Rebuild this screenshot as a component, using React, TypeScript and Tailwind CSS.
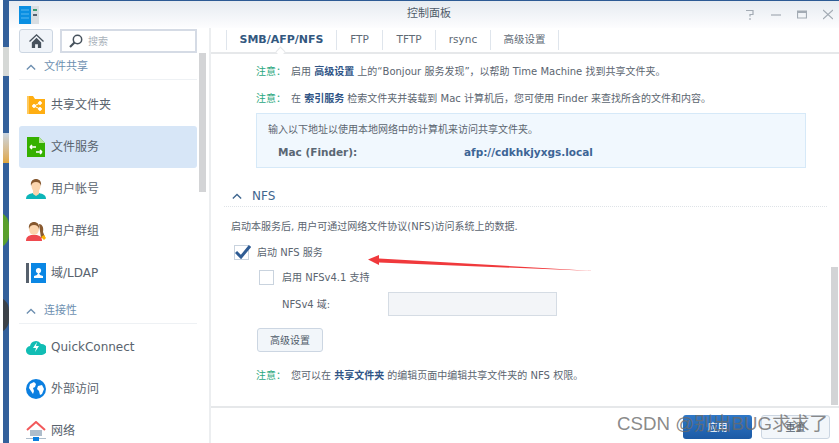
import { ReactNode } from "react"

const font = { fontFamily: '"DejaVu Sans", "Noto Sans CJK SC", sans-serif' }

function Chevron({ className }: { className: string }) {
  return (
    <svg viewBox="0 0 12 8" className={className} fill="none" stroke="currentColor" strokeWidth="1.6">
      <path d="M1 6.5 6 1.5l5 5" />
    </svg>
  )
}

const icons: Record<string, ReactNode> = {
  share: (
    <svg viewBox="0 0 20 20" className="w-5 h-5">
      <path d="M1 1h6l2 3h10v15H1z" fill="#ffae12" />
      <path d="M1 1h2v18H1z" fill="#ffc95c" />
      <g fill="#fff" stroke="#fff">
        <circle cx="8" cy="11" r="1.4" />
        <circle cx="14" cy="8" r="1.4" />
        <circle cx="14" cy="14" r="1.4" />
        <path d="M14 8l-6 3 6 3" fill="none" strokeWidth="1" />
      </g>
    </svg>
  ),
  file: (
    <svg viewBox="0 0 20 20" className="w-5 h-5">
      <path d="M1 0h12l6 6v14H1z" fill="#35b000" />
      <path d="M13 0l6 6h-6z" fill="#b6e59b" />
      <path d="M4 10h6M4 10l2-2M4 10l2 2M16 15h-6M16 15l-2-2M16 15l-2 2" stroke="#fff" strokeWidth="1.6" fill="none" />
    </svg>
  ),
  user: (
    <svg viewBox="0 0 20 20" className="w-5 h-5">
      <path d="M0 20c0-4 3-5 7-6h6c4 1 7 2 7 6z" fill="#0db5b8" />
      <path d="M7 11h6v4l-3 2-3-2z" fill="#fbd5ae" />
      <ellipse cx="10" cy="7" rx="4.5" ry="6" fill="#fbd5ae" />
      <path d="M5 7c-1-6 3-7 5-7s6 1 5 7c-1-3-2-4-5-4S6 4 5 7z" fill="#86582f" />
    </svg>
  ),
  group: (
    <svg viewBox="0 0 20 20" className="w-5 h-5">
      <path d="M13 3c3 0 5 3 4 8l2 5-4 1z" fill="#8a5a30" />
      <path d="M15 16l3-2 2 3-2 2z" fill="#fdb300" />
      <path d="M0 20c0-4 2-5 5-6h6c3 1 5 2 5 6z" fill="#ef4a4f" />
      <ellipse cx="8" cy="8" rx="5" ry="6" fill="#fbd5ae" />
      <path d="M3 8C2 2 6 1 8 1s6 1 5 7c-1-3-2-4-5-4S4 5 3 8z" fill="#86582f" />
    </svg>
  ),
  ldap: (
    <svg viewBox="0 0 20 20" className="w-5 h-5">
      <path d="M0 0h3v20H0z" fill="#56606c" />
      <path d="M5 0h15v20H5z" fill="#0b87e4" />
      <circle cx="12.5" cy="7.5" r="2.6" fill="#fff" />
      <path d="M12 10h1l1 2 3 1v2H8v-2l3-1z" fill="#fff" />
    </svg>
  ),
  quick: (
    <svg viewBox="0 0 20 20" className="w-5 h-5">
      <path d="M5 18a4.500 4.500 0 0 1-1-9 6 6 0 0 1 11-2 5.500 5.500 0 0 1 1 11z" fill="#11bdb4" />
      <path d="M11 5 7 11h3l-1 4 4-6h-3z" fill="#fff" />
    </svg>
  ),
  globe: (
    <svg viewBox="0 0 20 20" className="w-5 h-5">
      <circle cx="10" cy="10" r="10" fill="#0b7fe0" />
      <path d="M4 5l4-2 2 2-1 3-2 1 1 3-1 3-2-3-2-3zM12 7l4-1 2 4-2 5-2 1-1-4-2-2z" fill="#fff" />
    </svg>
  ),
  net: (
    <svg viewBox="0 0 20 20" className="w-5 h-5">
      <path d="M4 9h12v6H4z" fill="#aebdcb" />
      <path d="M1 9l9-8 9 8" fill="none" stroke="#f2595b" strokeWidth="2" />
      <path d="M0 17h20v1H0z" fill="#aebdcb" />
      <path d="M7 16h6v4H7z" fill="#0b7fe0" />
    </svg>
  ),
}

function SectionHead({ title, mt }: { title: string; mt: string }) {
  return (
    <div className={`${mt} h-[27px] pt-[2px] flex items-center pl-[7px] border-b border-[#eef1f4] text-[#6d8fb0]`}>
      <Chevron className="w-[10px] h-[7px]" />
      <span className="ml-[8px] text-[11px]">{title}</span>
    </div>
  )
}

function NavItem({ id, label, active }: { id: string; label: string; active?: boolean }) {
  return (
    <div className={`h-[42px] flex items-center pl-[7px] rounded-[3px] ${active ? "bg-[#d7e6f7]" : ""}`}>
      {icons[id]}
      <span className="ml-[5px] text-[12px] text-[#59636e]">{label}</span>
    </div>
  )
}

function Tab({ label, active, w }: { label: string; active?: boolean; w: string }) {
  return (
    <div
      className={`${w} h-[20px] flex items-center justify-center border-r border-[#dfe5ec] ${
        active ? "text-[11px] font-bold text-[#33587f]" : "text-[10.5px] text-[#606a75]"
      }`}
    >
      {label}
    </div>
  )
}

function Note({ children, mt }: { children: ReactNode; mt: string }) {
  return (
    <p className={`${mt} ml-[32px] h-[16px] leading-[16px] text-[10px] text-[#5b6570] whitespace-nowrap`}>
      <span className="text-[#2aa77e]">{"注意\uFF1A"}</span>
      <span className="ml-[5px]">{children}</span>
    </p>
  )
}

function Link({ children }: { children: ReactNode }) {
  return <span className="font-semibold text-[#2f5486]">{children}</span>
}

export default function App() {
  return (
    <div className="relative w-[839px] h-[443px] overflow-hidden flex bg-white" style={font}>
      <div className="w-[3px] shrink-0 bg-white" />
      {/* desktop peeking out on the left */}
      <div className="relative w-[6px] shrink-0 bg-[#33609b] overflow-hidden">
        <div className="absolute left-0 top-[47px] w-[6px] h-[29px] bg-[#d5d8d6]" />
        <div className="absolute left-0 top-[133px] w-[6px] h-[30px] bg-gradient-to-b from-[#c9d5e2] to-[#e0a63c]" />
        <div className="absolute left-[-20px] top-[212px] w-[26px] h-[36px] rounded-full bg-[#5aa02c]" />
        <div className="absolute left-[-20px] top-[297px] w-[26px] h-[36px] rounded-full bg-[#3c4248]" />
      </div>

      <div className="flex-1 flex flex-col min-w-0">
        <div className="h-[1px] shrink-0 bg-[#2c5a94]" />
        <header className="h-[27px] shrink-0 flex items-center bg-gradient-to-b from-[#e6ebf1] to-[#fdfdfe] relative">
          <svg viewBox="0 0 20 18" className="ml-[10px] w-5 h-[18px]">
            <path d="M0 0h12v18H0z" fill="#0a8fe2" />
            <path d="M12 0h8v18h-8z" fill="#d9dee2" />
            <path d="M2 4h8M2 8h8M2 12h8" stroke="#58b8f0" />
            <path d="M14 4h4" stroke="#3a9a70" strokeWidth="2" />
            <path d="M14 9h4" stroke="#566270" strokeWidth="2" />
          </svg>
          <span className="flex-1 pl-[74px] text-center text-[11px] text-[#4f5b69]">控制面板</span>
          <div className="flex items-center gap-[16px] pr-[6px] text-[#a3abb4]">
            <svg viewBox="0 0 10 11" className="w-[10px] h-[11px]" fill="none" stroke="currentColor" strokeWidth="1.200">
              <path d="M1 1.500h7v4H5v2M5 9v2" />
            </svg>
            <svg viewBox="0 0 10 11" className="w-[10px] h-[11px]" fill="none" stroke="currentColor" strokeWidth="1.200">
              <path d="M0 6h10" />
            </svg>
            <svg viewBox="0 0 10 11" className="w-[10px] h-[11px]" fill="none" stroke="currentColor" strokeWidth="1.200">
              <path d="M.5 2h9v7h-9z" />
              <path d="M0 3h10" strokeWidth="2" />
            </svg>
            <svg viewBox="0 0 10 11" className="w-[10px] h-[11px]" fill="none" stroke="currentColor" strokeWidth="1.200">
              <path d="M0 1l10 9M10 1 0 10" />
            </svg>
          </div>
        </header>

        <div className="flex-1 flex min-h-0">
          {/* sidebar */}
          <aside className="relative w-[202px] shrink-0 pl-[10px] pr-[12px] pt-[1px] border-r-[2px] border-[#eceef0]">
            <div className="flex gap-[7px] h-[24px]">
              <div className="w-[34px] flex items-center justify-center rounded-[3px] border border-[#ccd6e2] bg-[#f0f4f9]">
                <svg viewBox="0 0 16 15" className="w-[15px] h-[14px]" fill="#47525d">
                  <path d="M8 0 0 7.500l1 1L8 2l7 6.500 1-1z" />
                  <path d="M3 9l5-5 5 5v6H9.500v-4h-3v4H3z" />
                </svg>
              </div>
              <div className="flex-1 flex items-center pl-[7px] border-2 border-[#d5dbe5]">
                <svg viewBox="0 0 14 14" className="w-[14px] h-[14px]" fill="none" stroke="#47525d">
                  <circle cx="8.500" cy="5.500" r="4.200" strokeWidth="1.500" />
                  <path d="M5.500 8.500 1 13" strokeWidth="2.200" />
                </svg>
                <span className="ml-[5px] text-[10px] text-[#aab2bb]">搜索</span>
              </div>
            </div>
            <SectionHead title="文件共享" mt="mt-[0px]" />
            <div className="mt-[4px]">
              <NavItem id="share" label="共享文件夹" />
              <NavItem id="file" label="文件服务" active />
              <NavItem id="user" label="用户帐号" />
              <NavItem id="group" label="用户群组" />
              <NavItem id="ldap" label="域/LDAP" />
            </div>
            <SectionHead title="连接性" mt="mt-[3px]" />
            <div className="mt-[2px]">
              <NavItem id="quick" label="QuickConnect" />
              <NavItem id="globe" label="外部访问" />
              <NavItem id="net" label="网络" />
            </div>
            <div className="absolute left-[190px] top-[25px] w-[7px] h-[139px] bg-[#d3d4d6]" />
          </aside>

          {/* content */}
          <main className="relative flex-1 min-w-0 flex flex-col">
            <div className="relative h-[26px] shrink-0 flex items-center border-b-[2px] border-[#e6e8ea] pl-[15px]">
              <div className="h-[20px] border-l border-[#dfe5ec]" />
              <Tab label="SMB/AFP/NFS" active w="w-[110px]" />
              <Tab label="FTP" w="w-[46px]" />
              <Tab label="TFTP" w="w-[53px]" />
              <Tab label="rsync" w="w-[55px]" />
              <Tab label="高级设置" w="w-[68px]" />
              <div className="absolute left-[66px] top-[20px] w-[7px] h-[7px] rotate-45 bg-white border-l border-t border-[#e6e8ea]" />
            </div>

            <div className="flex-1 min-h-0 pl-[13px]">
              <Note mt="mt-[10px]">
                启用 <Link>高级设置</Link> 上的“Bonjour 服务发现”{"\uFF0C"}以帮助 Time Machine 找到共享文件夹。
              </Note>
              <Note mt="mt-[11px]">
                在 <Link>索引服务</Link> 检索文件夹并装载到 Mac 计算机后{"\uFF0C"}您可使用 Finder 来查找所含的文件和内容。
              </Note>

              <div className="ml-[32px] mt-[6px] w-[550px] h-[55px] border border-[#d6e9f8] bg-[#f1f8fe] pl-[11px] pt-[8px] text-[10px] text-[#5b6570]">
                <div className="h-[16px] leading-[16px]">输入以下地址以使用本地网络中的计算机来访问共享文件夹。</div>
                <div className="flex h-[16px] leading-[16px] mt-[6px] pl-[10px] text-[10.500px] font-bold">
                  <span className="w-[186px] text-[#5a6774]">Mac (Finder):</span>
                  <span className="text-[#3d6596]">afp://cdkhkjyxgs.local</span>
                </div>
              </div>

              <div className="mt-[18px] ml-[8px] h-[20px] flex items-center text-[#3f668f]">
                <Chevron className="w-[10px] h-[7px]" />
                <span className="ml-[10px] text-[12px]">NFS</span>
              </div>
              <div className="mr-[12px] border-b border-dotted border-[#dfe3e7]" />

              <p className="mt-[12px] ml-[7px] h-[16px] leading-[16px] text-[10px] text-[#5b6570]">
                启动本服务后, 用户可通过网络文件协议(NFS)访问系统上的数据.
              </p>

              <div className="mt-[9px] ml-[10px] h-[17px] flex items-center text-[10px] text-[#5b6570]">
                <div className="relative w-[15px] h-[15px] border border-[#c9d3de]">
                  <svg viewBox="0 0 16 14" className="absolute left-[0px] top-[-1px] w-[16px] h-[14px]" fill="none" stroke="#2f5c94" strokeWidth="3">
                    <path d="M1 7l5 5 9-11" />
                  </svg>
                </div>
                <span className="ml-[8px]">启动 NFS 服务</span>
              </div>

              <div className="mt-[8px] ml-[35px] h-[16px] flex items-center text-[10px] text-[#5b6570]">
                <div className="w-[15px] h-[15px] border border-[#c9d3de]" />
                <span className="ml-[8px]">启用 NFSv4.1 支持</span>
              </div>

              <div className="mt-[7px] ml-[58px] h-[24px] flex items-center text-[10px] text-[#5b6570]">
                <span className="w-[106px]">NFSv4 域:</span>
                <div className="w-[169px] h-[24px] border border-[#d5dce4] bg-[#f3f5f8]" />
              </div>

              <button
                type="button"
                className="block mt-[12px] ml-[33px] w-[66px] h-[24px] rounded-[3px] border border-[#ccd6e2] bg-[#f2f6fa] text-[10px] text-[#4f5b69]"
              >
                高级设置
              </button>

              <Note mt="mt-[16px]">
                您可以在 <Link>共享文件夹</Link> 的编辑页面中编辑共享文件夹的 NFS 权限。
              </Note>
            </div>

            <footer className="h-[37px] shrink-0 border-t-[2px] border-[#e6e8ea] flex justify-end gap-[9px] pt-[7px] pr-[9px]">
              <div className="w-[69px] h-[24px] rounded-[3px] bg-gradient-to-b from-[#2f78c8] to-[#1c5aa5] flex items-center justify-center text-[10px] text-white">
                应用
              </div>
              <div className="w-[69px] h-[24px] rounded-[3px] border border-[#ccd6e2] bg-[#f2f6fa] flex items-center justify-center text-[10px] text-[#4f5b69]">
                重置
              </div>
            </footer>

            <div className="absolute left-[620px] top-[239px] w-[7px] h-[138px] bg-[#d3d4d6]" />

            {/* red arrow annotation */}
            <svg viewBox="0 0 240 24" className="absolute left-[155px] top-[224px] w-[240px] h-[24px]">
              <path d="M2 7.500 13 3l0 3.500L228 19 13 10.500 13 13z" fill="#f0393c" />
            </svg>
          </main>
        </div>
      </div>

      {/* watermark */}
      <div
        className="absolute left-[617px] top-[411px] text-[18.700px] leading-[26px] text-[#6b6b6b]/80 whitespace-nowrap"
        style={{ fontFamily: '"Liberation Sans", "Noto Sans CJK SC", sans-serif' }}
      >
        CSDN @别出BUG求求了
      </div>
    </div>
  )
}
